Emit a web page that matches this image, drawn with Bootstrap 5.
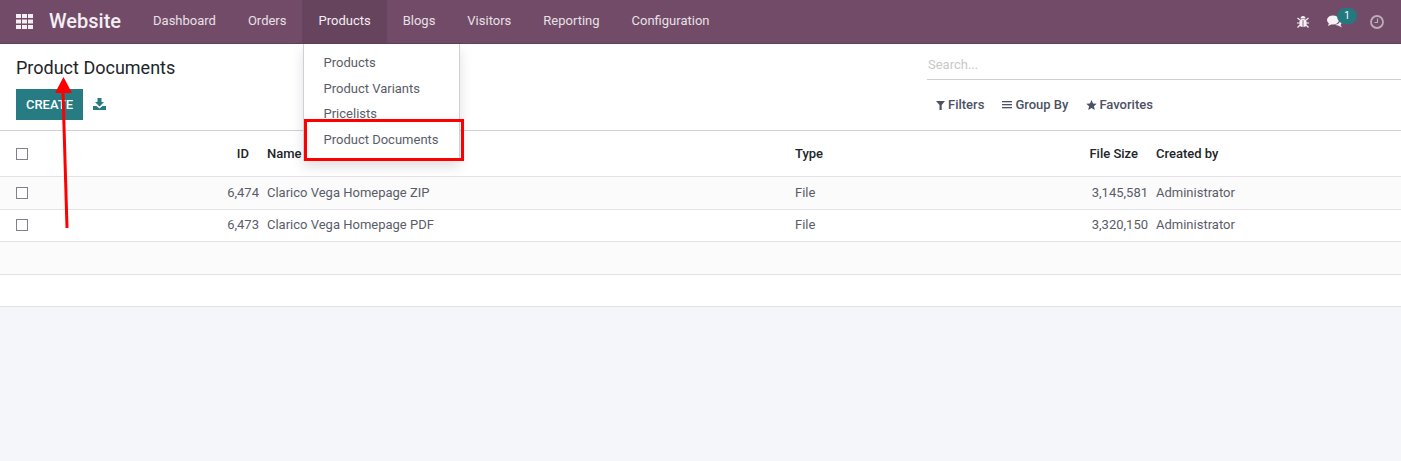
<!DOCTYPE html>
<html lang="en">
<head>
    <meta charset="UTF-8">
    <title>Product Documents</title>
    <link href="https://cdn.jsdelivr.net/npm/bootstrap@5.3.0/dist/css/bootstrap.min.css" rel="stylesheet">
    <style>
        html, body { height: 100%; }
        body { font-family: Roboto, "Liberation Sans", sans-serif; font-size: 13px; color: #4c4c4c; background: #f5f6fa; overflow: hidden; position: relative; }
        .top-bar { height: 44px; background: #714b67; border-bottom: 1px solid #5f4058; color: #fff; }
        .apps-icon { width: 17px; height: 15px; margin-left: 16px; }
        .brand-name { font-size: 20px; font-weight: 500; margin-left: 16px; margin-right: 16px; color: #f3eef2; line-height: 43px; }
        .top-link { display: block; height: 43px; line-height: 42px; padding: 0 16px; color: #e8e0e6; text-decoration: none; }
        .top-link.is-open { background: #67445e; color: #f3eef2; }
        .sys-tray { margin-right: 17px; }
        .bug-icon { margin-right: 18px; }
        .msg-wrap { position: relative; margin-right: 27px; }
        .msg-count { position: absolute; left: 10px; top: -7px; width: 20px; height: 16px; border-radius: 8px; background: #24797f; color: #fff; font-size: 10px; line-height: 15px; text-align: center; }
        .panel-top { height: 87px; background: #fff; border-bottom: 1px solid #d0cfd6; padding: 0 0 0 16px; }
        .page-title { font-size: 18px; font-weight: 400; color: #212529; line-height: 22px; margin: 13px 0 10px; }
        .create-btn { background: #267c82; color: #fff; border: 0; border-radius: 0; height: 31px; width: 67px; padding: 0; font-size: 13px; font-weight: 500; }
        .export-icon { margin: -2px 0 0 10px; }
        .search-box { width: 474px; height: 36px; border-bottom: 1px solid #cfced4; color: #c8c8c8; line-height: 42px; padding-left: 1px; margin-bottom: 15px; }
        .panel-right { width: 474px; }
        .filter-row { padding-left: 9px; column-gap: 18px; }
        .filter-btn { color: #4c5263; font-weight: 500; font-size: 13px; display: flex; align-items: center; gap: 2px; }
        .doc-table { width: 100%; table-layout: fixed; background: #fff; border-collapse: collapse; }
        .doc-table th { height: 45px; font-weight: 500; color: #212529; padding: 0 4px; vertical-align: middle; border-bottom: 1px solid #e4e4e6; box-shadow: 0 4px 8px -2px rgba(0,0,0,.13); position: relative; z-index: 1; }
        .doc-table td { height: 32px; padding: 0 4px; vertical-align: middle; border-bottom: 1px solid #e2e2e4; color: #5a5d68; }
        .doc-table tbody tr:nth-child(odd) td { background: #fbfbfb; height: 33px; }
        .doc-table th.head-num { padding-right: 14px; }
        .doc-table th .tick-box { margin-top: 2px; }
        .col-tick { width: 64px; }
        .col-id { width: 199px; }
        .col-name { width: 528px; }
        .col-type { width: 282px; }
        .col-size { width: 79px; }
        .tick-box { display: block; width: 12px; height: 12px; border: 1px solid #80818c; margin-left: 12px; background: #fff; }
        .menu-drop { position: absolute; left: 303px; top: 44px; width: 157px; height: 117px; background: #fff; border: 1px solid #d0cfd6; border-top: 0; box-shadow: 0 6px 12px rgba(0,0,0,.12); padding-top: 6px; z-index: 5; }
        .menu-drop a { display: block; height: 25.5px; line-height: 25px; padding-left: 19.5px; color: #5a5d68; text-decoration: none; }
        .red-box { position: absolute; left: 304px; top: 119px; width: 160px; height: 42px; border: 3px solid #f00; z-index: 6; }
        .red-arrow { position: absolute; left: 50px; top: 74px; z-index: 7; }
    </style>
</head>
<body>

<nav class="top-bar d-flex align-items-center">
    <svg class="apps-icon" viewBox="0 0 17 15" fill="#f3eef2">
        <rect x="0" y="0" width="5" height="4"/><rect x="6" y="0" width="5" height="4"/><rect x="12" y="0" width="5" height="4"/>
        <rect x="0" y="5.5" width="5" height="4"/><rect x="6" y="5.5" width="5" height="4"/><rect x="12" y="5.5" width="5" height="4"/>
        <rect x="0" y="11" width="5" height="4"/><rect x="6" y="11" width="5" height="4"/><rect x="12" y="11" width="5" height="4"/>
    </svg>
    <span class="brand-name">Website</span>
    <a class="top-link" href="#">Dashboard</a>
    <a class="top-link" href="#">Orders</a>
    <a class="top-link is-open" href="#">Products</a>
    <a class="top-link" href="#">Blogs</a>
    <a class="top-link" href="#">Visitors</a>
    <a class="top-link" href="#">Reporting</a>
    <a class="top-link" href="#">Configuration</a>
    <div class="sys-tray ms-auto d-flex align-items-center">
        <svg class="bug-icon" width="12" height="13" viewBox="0 0 12 13" fill="#f6f1f5" stroke="#f6f1f5" stroke-width="1.200">
            <rect x="2.500" y="4" width="7" height="8" rx="3" stroke="none"/><path d="M3.500 3.500a2.500 2.500 0 0 1 5 0Z" stroke="none"/>
            <path d="M.5 3 3 5M11.500 3 9 5M0 8h3M12 8H9M.5 12.500 3 10M11.500 12.500 9 10" fill="none"/>
            <path d="M6 5v7" stroke="#714b67" stroke-width=".8" fill="none"/>
        </svg>
        <div class="msg-wrap d-flex">
            <svg width="16" height="13" viewBox="0 0 16 13" fill="#f6f1f5">
                <ellipse cx="6" cy="5" rx="6" ry="4.500"/><path d="M2 8 1 11 5 9Z"/>
                <path d="M13 5.500c2 1.500 2 3.500.5 4.500l1.500 2.500-4-2c-1 0-2-.2-3-.8 3 0 5-2 5-4.200Z"/>
            </svg>
            <span class="msg-count">1</span>
        </div>
        <svg width="14" height="14" viewBox="0 0 14 14" fill="none" stroke="#bcadb8" stroke-width="1.800">
            <circle cx="7" cy="7" r="6"/><path d="M7.500 3.500V7.500H4.500" stroke-width="1.200"/>
        </svg>
    </div>
</nav>

<div class="panel-top d-flex justify-content-between">
    <div>
        <h1 class="page-title">Product Documents</h1>
        <div class="d-flex align-items-center">
            <button type="button" class="create-btn">CREATE</button>
            <svg class="export-icon" width="13" height="12" viewBox="0 0 13 12" fill="#267c82">
                <path d="M4.500 0h4v4h2.500L6.500 8.500 2 4h2.500Z"/><path d="M0 8h3.500L6.500 10.500 9.500 8H13v4H0Z"/>
            </svg>
        </div>
    </div>
    <div class="panel-right">
        <div class="search-box">Search...</div>
        <div class="filter-row d-flex">
            <span class="filter-btn">
                <svg width="10" height="10" viewBox="0 0 10 10" fill="#4c5263"><path d="M0 1h9L5.700 5v5H3.500V5Z"/></svg>Filters
            </span>
            <span class="filter-btn">
                <svg width="11" height="10" viewBox="0 0 11 10" fill="#4c5263"><rect y="1" width="10" height="1.300"/><rect y="4" width="10" height="1.300"/><rect y="7" width="10" height="1.300"/></svg>Group By
            </span>
            <span class="filter-btn">
                <svg width="11" height="10" viewBox="0 0 11 10" fill="#4c5263"><path d="M5.500 0 7 3.500l3.700.3-2.800 2.400.9 3.700-3.300-2-3.300 2 .9-3.700L.3 3.800 4 3.500Z"/></svg>Favorites
            </span>
        </div>
    </div>
</div>

<table class="doc-table">
    <colgroup>
        <col class="col-tick"><col class="col-id"><col class="col-name"><col class="col-type"><col class="col-size"><col>
    </colgroup>
    <thead>
        <tr>
            <th><span class="tick-box"></span></th>
            <th class="text-end head-num">ID</th>
            <th>Name</th>
            <th>Type</th>
            <th class="text-end head-num">File Size</th>
            <th>Created by</th>
        </tr>
    </thead>
    <tbody>
        <tr>
            <td><span class="tick-box"></span></td>
            <td class="text-end">6,474</td>
            <td>Clarico Vega Homepage ZIP</td>
            <td>File</td>
            <td class="text-end">3,145,581</td>
            <td>Administrator</td>
        </tr>
        <tr>
            <td><span class="tick-box"></span></td>
            <td class="text-end">6,473</td>
            <td>Clarico Vega Homepage PDF</td>
            <td>File</td>
            <td class="text-end">3,320,150</td>
            <td>Administrator</td>
        </tr>
        <tr><td colspan="6"></td></tr>
        <tr><td colspan="6"></td></tr>
    </tbody>
</table>

<div class="menu-drop">
    <a href="#">Products</a>
    <a href="#">Product Variants</a>
    <a href="#">Pricelists</a>
    <a href="#">Product Documents</a>
</div>
<div class="red-box"></div>
<svg class="red-arrow" width="24" height="156" viewBox="0 0 24 156">
    <path d="M13 18 17 154" stroke="#f00" stroke-width="3" fill="none"/>
    <path d="M13.500 3 5 19H22Z" fill="#f00"/>
</svg>

<script src="https://cdn.jsdelivr.net/npm/bootstrap@5.3.0/dist/js/bootstrap.bundle.min.js"></script>
</body>
</html>
